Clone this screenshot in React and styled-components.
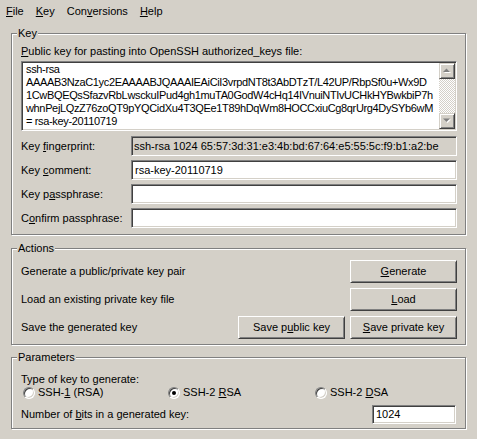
import React from 'react';
import styled, { createGlobalStyle } from 'styled-components';

const GlobalStyle = createGlobalStyle`
  html, body {
    margin: 0;
    padding: 0;
    background: #d4d0c8;
  }
`;

const Window = styled.div`
  width: 477px;
  height: 439px;
  overflow: hidden;
  display: flex;
  flex-direction: column;
  background: #d4d0c8;
  color: #000;
  font-family: "Liberation Sans", Arial, sans-serif;
  font-size: 11px;
  line-height: 13px;

  u {
    text-decoration: underline;
    text-underline-offset: 1px;
  }
`;

const MenuBar = styled.div`
  display: flex;
  align-items: center;
  height: 22px;
`;

const MenuItem = styled.span`
  padding: 0 6px;
`;

const Body = styled.div`
  display: flex;
  flex-direction: column;
  padding: 11px 11px 0;
`;

const Group = styled.div`
  display: flex;
  flex-direction: column;
  margin-top: ${(p) => p.$mt || 0}px;
  padding: 0 8px ${(p) => p.$pb}px 9px;
  border: 1px solid #808080;
  box-shadow: inset 1px 1px #fff, 1px 1px #fff;
`;

const Legend = styled.span`
  align-self: flex-start;
  height: 13px;
  margin: -7px 0 0 -4px;
  padding: 0 1px;
  background: #d4d0c8;
`;

const Caption = styled.div`
  height: 13px;
  margin-top: ${(p) => p.$mt}px;
  white-space: nowrap;
`;

const sunken = `
  box-sizing: border-box;
  border: 1px solid;
  border-color: #808080 #fff #fff #808080;
  box-shadow: inset 1px 1px #404040, inset -1px -1px #d4d0c8;
`;

const KeyBox = styled.div`
  ${sunken}
  display: flex;
  height: 70px;
  margin-top: 3px;
  padding: 1px;
  background: #fff;
`;

const KeyText = styled.div`
  flex: 1;
  padding: 0 3px;
  letter-spacing: -0.35px;
  white-space: pre;
  overflow: hidden;
`;

const ScrollBar = styled.div`
  display: flex;
  flex-direction: column;
  width: 16px;
  background: repeating-conic-gradient(#fff 0 25%, #d4d0c8 0 50%) 0 0 / 2px 2px;
`;

const ScrollTrack = styled.div`
  flex: 1;
`;

const ScrollButton = styled.div`
  box-sizing: border-box;
  display: flex;
  align-items: center;
  justify-content: center;
  width: 16px;
  height: 16px;
  background: #d4d0c8;
  border: 1px solid;
  border-color: #d4d0c8 #404040 #404040 #d4d0c8;
  box-shadow: inset 1px 1px #fff, inset -1px -1px #808080;
`;

const FieldList = styled.div`
  display: flex;
  flex-direction: column;
  gap: 4px;
  margin-top: 5px;
`;

const FieldRow = styled.div`
  display: flex;
  align-items: center;
`;

const FieldLabel = styled.span`
  width: 110px;
  white-space: nowrap;
`;

const Field = styled.div`
  ${sunken}
  flex: 1;
  display: flex;
  align-items: center;
  height: 20px;
  padding: 0 ${(p) => (p.$readonly ? 2 : 3)}px;
  background: ${(p) => (p.$readonly ? '#d4d0c8' : '#fff')};
  white-space: nowrap;
  overflow: hidden;
`;

const ActionList = styled.div`
  display: flex;
  flex-direction: column;
  gap: 5px;
  margin-top: 5px;
`;

const ActionRow = styled.div`
  display: flex;
  align-items: center;
  gap: 5px;
`;

const ActionLabel = styled.span`
  flex: 1;
  white-space: nowrap;
`;

const Button = styled.button`
  box-sizing: border-box;
  width: 107px;
  height: 23px;
  margin: 0;
  padding: 0;
  font: inherit;
  color: #000;
  background: #d4d0c8;
  border: 1px solid;
  border-color: #fff #404040 #404040 #fff;
  border-radius: 0;
  box-shadow: inset 1px 1px #d4d0c8, inset -1px -1px #808080;
`;

const RadioRow = styled.div`
  display: grid;
  grid-template-columns: 145px 147px 1fr;
  height: 13px;
  padding-left: 2px;
`;

const RadioOption = styled.label`
  display: flex;
  align-items: center;
  gap: 3px;
  white-space: nowrap;
`;

const RadioDot = styled.span`
  box-sizing: border-box;
  position: relative;
  width: 12px;
  height: 12px;
  border-radius: 50%;
  background: #fff;
  border: 1px solid;
  border-color: #808080 #fff #fff #808080;
  box-shadow: inset 1px 1px #404040, inset -1px -1px #d4d0c8;

  &::after {
    content: '';
    display: ${(p) => (p.$checked ? 'block' : 'none')};
    position: absolute;
    left: 3px;
    top: 3px;
    width: 4px;
    height: 4px;
    border-radius: 50%;
    background: #000;
  }
`;

const BitsRow = styled.div`
  display: flex;
  align-items: center;
  height: 19px;
  margin-top: 6px;
`;

const BitsField = styled(Field)`
  flex: none;
  width: 84px;
  height: 19px;
  margin-right: 1px;
`;

const KEY_LINES = [
  'ssh-rsa',
  'AAAAB3NzaC1yc2EAAAABJQAAAIEAiCiI3vrpdNT8t3AbDTzT/L42UP/RbpSf0u+Wx9D',
  '1CwBQEQsSfazvRbLwsckuIPud4gh1muTA0GodW4cHq14IVnuiNTIvUCHkHYBwkbiP7h',
  'whnPejLQzZ76zoQT9pYQCidXu4T3QEe1T89hDqWm8HOCCxiuCg8qrUrg4DySYb6wM',
  '= rsa-key-20110719',
];

// disabled scroll arrow: grey triangle with a white shadow
const Arrow = ({ up }) => (
  <svg width="9" height="6" viewBox="0 0 9 6">
    {up ? (
      <>
        <polygon points="1,5 8,5 4.5,1.5" fill="#fff" />
        <polygon points="0,4 7,4 3.5,0.5" fill="#808080" />
      </>
    ) : (
      <>
        <polygon points="1,1.5 8,1.5 4.5,5" fill="#fff" />
        <polygon points="0,0.5 7,0.5 3.5,4" fill="#808080" />
      </>
    )}
  </svg>
);

const Radio = ({ checked, children }) => (
  <RadioOption>
    <RadioDot $checked={checked} />
    <span>{children}</span>
  </RadioOption>
);

export default function App() {
  return (
    <Window>
      <GlobalStyle />
      <MenuBar>
        <MenuItem><u>F</u>ile</MenuItem>
        <MenuItem><u>K</u>ey</MenuItem>
        <MenuItem>Con<u>v</u>ersions</MenuItem>
        <MenuItem><u>H</u>elp</MenuItem>
      </MenuBar>
      <Body>
        <Group $pb={6}>
          <Legend>Key</Legend>
          <Caption $mt={5}>
            <u>P</u>ublic key for pasting into OpenSSH authorized_keys file:
          </Caption>
          <KeyBox>
            <KeyText>{KEY_LINES.join('\n')}</KeyText>
            <ScrollBar>
              <ScrollButton><Arrow up /></ScrollButton>
              <ScrollTrack />
              <ScrollButton><Arrow /></ScrollButton>
            </ScrollBar>
          </KeyBox>
          <FieldList>
            <FieldRow>
              <FieldLabel>Key <u>f</u>ingerprint:</FieldLabel>
              <Field $readonly>ssh-rsa 1024 65:57:3d:31:e3:4b:bd:67:64:e5:55:5c:f9:b1:a2:be</Field>
            </FieldRow>
            <FieldRow>
              <FieldLabel>Key <u>c</u>omment:</FieldLabel>
              <Field>rsa-key-20110719</Field>
            </FieldRow>
            <FieldRow>
              <FieldLabel>Key p<u>a</u>ssphrase:</FieldLabel>
              <Field />
            </FieldRow>
            <FieldRow>
              <FieldLabel>C<u>o</u>nfirm passphrase:</FieldLabel>
              <Field />
            </FieldRow>
          </FieldList>
        </Group>

        <Group $mt={13} $pb={5}>
          <Legend>Actions</Legend>
          <ActionList>
            <ActionRow>
              <ActionLabel>Generate a public/private key pair</ActionLabel>
              <Button><u>G</u>enerate</Button>
            </ActionRow>
            <ActionRow>
              <ActionLabel>Load an existing private key file</ActionLabel>
              <Button><u>L</u>oad</Button>
            </ActionRow>
            <ActionRow>
              <ActionLabel>Save the generated key</ActionLabel>
              <Button>Save p<u>u</u>blic key</Button>
              <Button><u>S</u>ave private key</Button>
            </ActionRow>
          </ActionList>
        </Group>

        <Group $mt={12} $pb={4}>
          <Legend>Parameters</Legend>
          <Caption $mt={9}>Type of key to generate:</Caption>
          <RadioRow>
            <Radio>SSH-<u>1</u> (RSA)</Radio>
            <Radio checked>SSH-2 <u>R</u>SA</Radio>
            <Radio>SSH-2 <u>D</u>SA</Radio>
          </RadioRow>
          <BitsRow>
            <ActionLabel>Number of <u>b</u>its in a generated key:</ActionLabel>
            <BitsField>1024</BitsField>
          </BitsRow>
        </Group>
      </Body>
    </Window>
  );
}
